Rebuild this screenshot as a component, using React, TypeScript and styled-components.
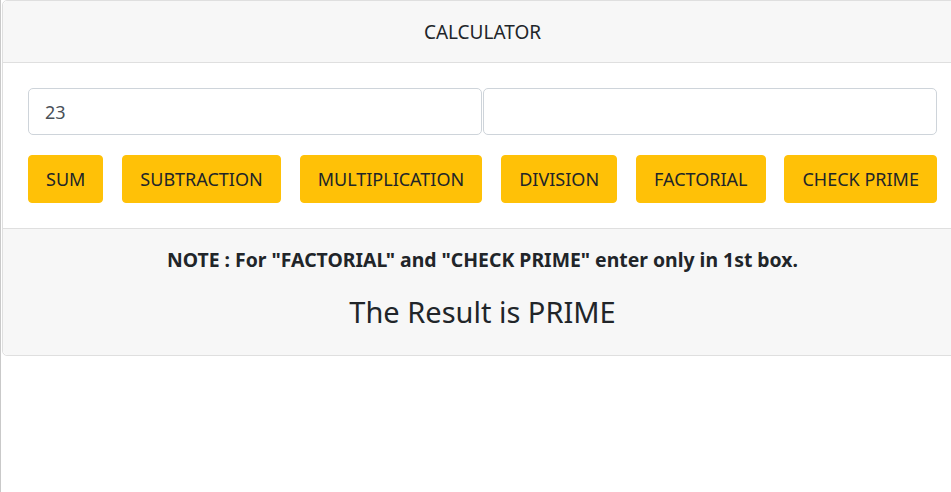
import React from "react";
import styled, { createGlobalStyle } from "styled-components";

const Global = createGlobalStyle`
  html, body { margin: 0; padding: 0; background: #fff; }
  body { font-family: "Noto Sans", "Open Sans", sans-serif; color: #212529; }
  * { box-sizing: border-box; }
`;

const Page = styled.div`
  min-height: 492px;
  border-left: 1px solid #c9c9c9;
  padding-left: 1px;
  overflow: hidden;
`;

const Card = styled.div`
  width: 961px;
  border: 1px solid #dfdfdf;
  border-radius: 5px;
  background: #fff;
  display: flex;
  flex-direction: column;
`;

const Header = styled.div`
  height: 62px;
  background: #f7f7f7;
  border-bottom: 1px solid #dfdfdf;
  display: flex;
  align-items: center;
  justify-content: center;
  font-size: 19px;
  border-radius: 5px 5px 0 0;
`;

const Body = styled.div`
  padding: 25px 25px 25px;
  display: flex;
  flex-direction: column;
  gap: 20px;
`;

const InputRow = styled.div`
  display: flex;
  gap: 1px;
`;

const Field = styled.input`
  flex: 1;
  min-width: 0;
  height: 47px;
  border: 1px solid #ced4da;
  border-radius: 5px;
  padding: 0 16px;
  font-family: inherit;
  font-size: 18px;
  color: #495057;
  outline: none;
`;

const ButtonRow = styled.div`
  display: flex;
  justify-content: space-between;
`;

const Btn = styled.button`
  height: 48px;
  padding: 0 17px;
  background: #ffc107;
  border: 1px solid #ffc107;
  border-radius: 4px;
  font-family: inherit;
  font-size: 18px;
  color: #212529;
  cursor: pointer;
`;

const Footer = styled.div`
  background: #f7f7f7;
  border-top: 1px solid #dfdfdf;
  border-radius: 0 0 5px 5px;
  height: 127px;
  display: flex;
  flex-direction: column;
  align-items: center;
  padding-top: 17px;
`;

const Note = styled.div`
  font-weight: 700;
  font-size: 19.4px;
  line-height: 28px;
`;

const Result = styled.div`
  margin-top: 19px;
  font-size: 29px;
  line-height: 38px;
`;

const ops = ["SUM", "SUBTRACTION", "MULTIPLICATION", "DIVISION", "FACTORIAL", "CHECK PRIME"];

export default function App() {
  return (
    <>
      <Global />
      <Page>
        <Card>
          <Header>CALCULATOR</Header>
          <Body>
            <InputRow>
              <Field defaultValue="23" />
              <Field defaultValue="" />
            </InputRow>
            <ButtonRow>
              {ops.map((o) => (
                <Btn key={o}>{o}</Btn>
              ))}
            </ButtonRow>
          </Body>
          <Footer>
            <Note>NOTE : For "FACTORIAL" and "CHECK PRIME" enter only in 1st box.</Note>
            <Result>The Result is PRIME</Result>
          </Footer>
        </Card>
      </Page>
    </>
  );
}
